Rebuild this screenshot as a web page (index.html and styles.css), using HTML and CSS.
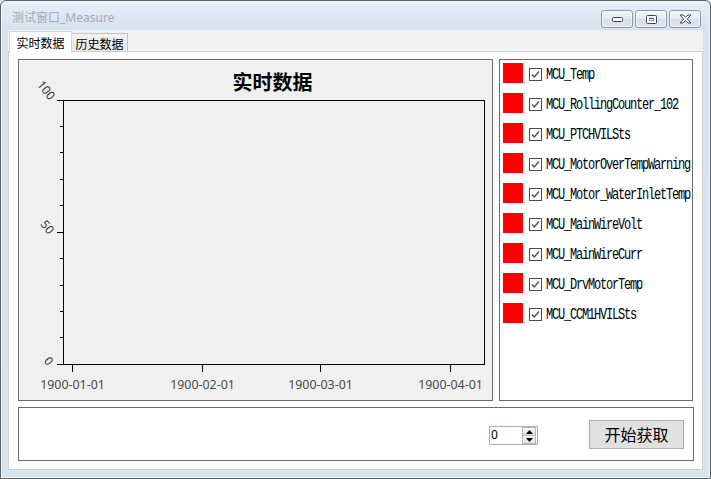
FILE: index.html
```html
<!DOCTYPE html>
<html lang="zh">
<head>
<meta charset="utf-8">
<title>测试窗口_Measure</title>
<link rel="stylesheet" href="styles.css">
</head>
<body>
<div class="window">
  <div class="titlebar">
    <span class="title">测试窗口_Measure</span>
    <div class="winbtns">
      <div class="winbtn">
        <svg width="11" height="5" viewBox="0 0 11 5"><rect x="0.5" y="0.5" width="10" height="4" rx="1" fill="#fff" stroke="#3c4656"/></svg>
      </div>
      <div class="winbtn">
        <svg width="11" height="9" viewBox="0 0 11 9"><rect x="0.5" y="0.5" width="10" height="8" rx="1" fill="#fff" stroke="#3c4656"/><rect x="3" y="3" width="5" height="3" fill="#3c4656"/><rect x="3.5" y="4" width="4" height="1.5" fill="#fff"/></svg>
      </div>
      <div class="winbtn">
        <svg width="13" height="10" viewBox="0 0 13 10"><path d="M1 1 L4 1 L6.5 3.3 L9 1 L12 1 L8.3 5 L12 9 L9 9 L6.5 6.7 L4 9 L1 9 L4.7 5 Z" fill="#fff" stroke="#3c4656" stroke-width="1" stroke-linejoin="round"/></svg>
      </div>
    </div>
  </div>
  <div class="client">
    <div class="tabs">
      <div class="tab active">实时数据</div>
      <div class="tab">历史数据</div>
    </div>
    <div class="pane">
      <div class="toprow">
        <div class="chartbox">
          <svg class="chart" width="473" height="340" viewBox="0 0 473 340">
            <g stroke="#000" stroke-width="1" shape-rendering="crispEdges" fill="none">
              <line x1="44.5" y1="40" x2="44.5" y2="305"/>
              <line x1="38" y1="40.5" x2="466" y2="40.5"/>
              <line x1="465.5" y1="40" x2="465.5" y2="305"/>
              <line x1="38" y1="304.5" x2="466" y2="304.5"/>
              <line x1="38" y1="172.5" x2="44" y2="172.5"/>
              <line x1="41" y1="66.5" x2="44" y2="66.5"/>
              <line x1="41" y1="92.5" x2="44" y2="92.5"/>
              <line x1="41" y1="119.5" x2="44" y2="119.5"/>
              <line x1="41" y1="145.5" x2="44" y2="145.5"/>
              <line x1="41" y1="198.5" x2="44" y2="198.5"/>
              <line x1="41" y1="225.5" x2="44" y2="225.5"/>
              <line x1="41" y1="251.5" x2="44" y2="251.5"/>
              <line x1="41" y1="277.5" x2="44" y2="277.5"/>
              <line x1="53.5" y1="305" x2="53.5" y2="312"/>
              <line x1="183.5" y1="305" x2="183.5" y2="312"/>
              <line x1="301.5" y1="305" x2="301.5" y2="312"/>
              <line x1="431.5" y1="305" x2="431.5" y2="312"/>
            </g>
            <text class="ctitle" x="253.5" y="30" text-anchor="middle">实时数据</text>
            <text class="ylab" transform="translate(27.5 30) rotate(52)" text-anchor="middle" dominant-baseline="central">100</text>
            <text class="ylab" transform="translate(28.5 167) rotate(52)" text-anchor="middle" dominant-baseline="central">50</text>
            <text class="ylab" transform="translate(30 301) rotate(52)" text-anchor="middle" dominant-baseline="central">0</text>
            <text class="xlab" x="53.5" y="328.5" text-anchor="middle">1900-01-01</text>
            <text class="xlab" x="183.5" y="328.5" text-anchor="middle">1900-02-01</text>
            <text class="xlab" x="301.5" y="328.5" text-anchor="middle">1900-03-01</text>
            <text class="xlab" x="431.5" y="328.5" text-anchor="middle">1900-04-01</text>
          </svg>
        </div>
        <div class="legend">
          <div class="item"><span class="swatch"></span><span class="check"><svg width="13" height="13" viewBox="0 0 13 13"><rect x="0.5" y="0.5" width="12" height="12" fill="#fff" stroke="#4d4d4d"/><path d="M3 6.5 L5.3 9 L10 3.5" fill="none" stroke="#4d4d4d" stroke-width="1.4"/></svg></span><span class="name">MCU_Temp</span></div>
          <div class="item"><span class="swatch"></span><span class="check"><svg width="13" height="13" viewBox="0 0 13 13"><rect x="0.5" y="0.5" width="12" height="12" fill="#fff" stroke="#4d4d4d"/><path d="M3 6.5 L5.3 9 L10 3.5" fill="none" stroke="#4d4d4d" stroke-width="1.4"/></svg></span><span class="name">MCU_RollingCounter_102</span></div>
          <div class="item"><span class="swatch"></span><span class="check"><svg width="13" height="13" viewBox="0 0 13 13"><rect x="0.5" y="0.5" width="12" height="12" fill="#fff" stroke="#4d4d4d"/><path d="M3 6.5 L5.3 9 L10 3.5" fill="none" stroke="#4d4d4d" stroke-width="1.4"/></svg></span><span class="name">MCU_PTCHVILSts</span></div>
          <div class="item"><span class="swatch"></span><span class="check"><svg width="13" height="13" viewBox="0 0 13 13"><rect x="0.5" y="0.5" width="12" height="12" fill="#fff" stroke="#4d4d4d"/><path d="M3 6.5 L5.3 9 L10 3.5" fill="none" stroke="#4d4d4d" stroke-width="1.4"/></svg></span><span class="name">MCU_MotorOverTempWarning</span></div>
          <div class="item"><span class="swatch"></span><span class="check"><svg width="13" height="13" viewBox="0 0 13 13"><rect x="0.5" y="0.5" width="12" height="12" fill="#fff" stroke="#4d4d4d"/><path d="M3 6.5 L5.3 9 L10 3.5" fill="none" stroke="#4d4d4d" stroke-width="1.4"/></svg></span><span class="name">MCU_Motor_WaterInletTemp</span></div>
          <div class="item"><span class="swatch"></span><span class="check"><svg width="13" height="13" viewBox="0 0 13 13"><rect x="0.5" y="0.5" width="12" height="12" fill="#fff" stroke="#4d4d4d"/><path d="M3 6.5 L5.3 9 L10 3.5" fill="none" stroke="#4d4d4d" stroke-width="1.4"/></svg></span><span class="name">MCU_MainWireVolt</span></div>
          <div class="item"><span class="swatch"></span><span class="check"><svg width="13" height="13" viewBox="0 0 13 13"><rect x="0.5" y="0.5" width="12" height="12" fill="#fff" stroke="#4d4d4d"/><path d="M3 6.5 L5.3 9 L10 3.5" fill="none" stroke="#4d4d4d" stroke-width="1.4"/></svg></span><span class="name">MCU_MainWireCurr</span></div>
          <div class="item"><span class="swatch"></span><span class="check"><svg width="13" height="13" viewBox="0 0 13 13"><rect x="0.5" y="0.5" width="12" height="12" fill="#fff" stroke="#4d4d4d"/><path d="M3 6.5 L5.3 9 L10 3.5" fill="none" stroke="#4d4d4d" stroke-width="1.4"/></svg></span><span class="name">MCU_DrvMotorTemp</span></div>
          <div class="item"><span class="swatch"></span><span class="check"><svg width="13" height="13" viewBox="0 0 13 13"><rect x="0.5" y="0.5" width="12" height="12" fill="#fff" stroke="#4d4d4d"/><path d="M3 6.5 L5.3 9 L10 3.5" fill="none" stroke="#4d4d4d" stroke-width="1.4"/></svg></span><span class="name">MCU_CCM1HVILSts</span></div>
        </div>
      </div>
      <div class="bottombox">
        <div class="spin">
          <span class="spinval">0</span>
          <div class="spinbtns">
            <div class="sb"><svg width="7" height="4" viewBox="0 0 7 4"><path d="M0 4 L3.5 0 L7 4 Z" fill="#000"/></svg></div>
            <div class="sb"><svg width="7" height="4" viewBox="0 0 7 4"><path d="M0 0 L3.5 4 L7 0 Z" fill="#000"/></svg></div>
          </div>
        </div>
        <button class="start">开始获取</button>
      </div>
    </div>
  </div>
</div>
</body>
</html>
```
FILE: styles.css
```css
html, body {
  margin: 0;
  padding: 0;
  background: #d8e4f1;
}
.window {
  width: 711px;
  height: 479px;
  box-sizing: border-box;
  border: 1px solid #5e6266;
  border-radius: 6px 6px 0 0;
  background: linear-gradient(#e7eef7 0, #d6e2f0 29px, #d9e4f1 100%);
  box-shadow: inset 0 0 0 1px rgba(255,255,255,0.55);
  padding: 0 7px 8px 7px;
  display: flex;
  flex-direction: column;
  font-family: "Noto Sans", "Noto Sans CJK SC", sans-serif;
  overflow: hidden;
}
.titlebar {
  height: 29px;
  flex: none;
  display: flex;
  align-items: flex-start;
  justify-content: space-between;
  padding: 0 2px 0 4px;
}
.title {
  margin-top: 9px;
  font-size: 12px;
  line-height: 16px;
  color: #a3acb7;
  font-family: "Noto Sans", "Noto Sans CJK SC", sans-serif;
}
.winbtns {
  display: flex;
  gap: 2px;
  margin-top: 9px;
}
.winbtn {
  width: 32px;
  height: 18px;
  box-sizing: border-box;
  border: 1px solid #8d9bb0;
  border-radius: 3px;
  background: linear-gradient(#f3f6fa 0, #e4eaf2 50%, #d6dfea 51%, #dfe6ef 100%);
  box-shadow: inset 0 0 0 1px rgba(255,255,255,0.6);
  display: flex;
  align-items: center;
  justify-content: center;
}
.client {
  flex: 1;
  display: flex;
  flex-direction: column;
  background: #f0f0f0;
  min-height: 0;
}
.tabs {
  height: 21px;
  flex: none;
  display: flex;
  align-items: flex-start;
  padding-left: 1px;
  position: relative;
  z-index: 1;
}
.tab {
  box-sizing: border-box;
  font-family: "Noto Sans CJK SC", sans-serif;
  font-size: 12px;
  color: #000;
  border: 1px solid #c3c3c3;
  border-bottom: none;
  display: flex;
  align-items: center;
  justify-content: center;
}
.tab.active {
  width: 63px;
  height: 22px;
  margin-top: 1px;
  background: #fff;
  border-color: #d4d4d4;
}
.tab:not(.active) {
  width: 56px;
  height: 18px;
  margin-top: 3px;
  background: linear-gradient(#f2f2f2, #e7e7e7);
  border-left: none;
  padding-top: 1px;
}
.pane {
  flex: 1;
  box-sizing: border-box;
  border: 1px solid #cfcfcf;
  background: #fff;
  padding: 7px 8px 8px 9px;
  display: flex;
  flex-direction: column;
  gap: 6px;
}
.toprow {
  height: 342px;
  display: flex;
  gap: 6px;
}
.chartbox {
  width: 475px;
  height: 342px;
  box-sizing: border-box;
  border: 1px solid #6a6a6a;
  background: #f0f0f0;
}
.chart {
  display: block;
}
.ctitle {
  font-family: "Noto Sans CJK SC", sans-serif;
  font-weight: bold;
  font-size: 20px;
  fill: #000;
}
.ylab {
  font-family: "Noto Sans", sans-serif;
  font-size: 12px;
  fill: #333;
}
.xlab {
  font-family: "Noto Sans", sans-serif;
  font-size: 12.4px;
  fill: #4a4a4a;
}
.legend {
  width: 194px;
  height: 342px;
  box-sizing: border-box;
  border: 1px solid #6a6a6a;
  background: #fff;
  padding: 3px 0 0 3px;
  display: flex;
  flex-direction: column;
  gap: 10px;
}
.item {
  height: 20px;
  display: flex;
  align-items: flex-start;
}
.swatch {
  width: 20px;
  height: 20px;
  background: #ff0000;
  flex: none;
}
.check {
  margin: 5px 4px 0 6px;
  width: 13px;
  height: 13px;
  flex: none;
  display: block;
}
.check svg {
  display: block;
}
.name {
  font-family: "Liberation Mono", monospace;
  font-size: 12px;
  letter-spacing: -1.2px;
  line-height: 12px;
  margin-top: 6px;
  color: #000;
  white-space: nowrap;
  transform: scaleY(1.3);
  transform-origin: 0 60%;
}
.bottombox {
  flex: 1;
  box-sizing: border-box;
  border: 1px solid #6a6a6a;
  background: #fff;
  display: flex;
  align-items: center;
  justify-content: flex-end;
  padding-right: 9px;
  gap: 51px;
}
.spin {
  margin-top: 3px;
  width: 49px;
  height: 19px;
  box-sizing: border-box;
  border: 1px solid #abadb3;
  background: #fff;
  display: flex;
  align-items: stretch;
}
.spinval {
  flex: 1;
  font-family: "Noto Sans", sans-serif;
  font-size: 12px;
  line-height: 16px;
  padding-left: 1px;
  color: #000;
}
.spinbtns {
  width: 14px;
  margin-right: 1px;
  display: flex;
  flex-direction: column;
}
.sb {
  flex: 1;
  box-sizing: border-box;
  border: 1px solid #b8b8b8;
  background: linear-gradient(#f4f4f4, #e2e2e2);
  display: flex;
  align-items: center;
  justify-content: center;
}
.sb + .sb {
  border-top: none;
}
.start {
  width: 95px;
  height: 29px;
  box-sizing: border-box;
  border: 1px solid #adadad;
  background: #e1e1e1;
  font-family: "Noto Sans CJK SC", sans-serif;
  font-size: 16px;
  color: #000;
  padding: 0;
  margin: 0;
}
```
